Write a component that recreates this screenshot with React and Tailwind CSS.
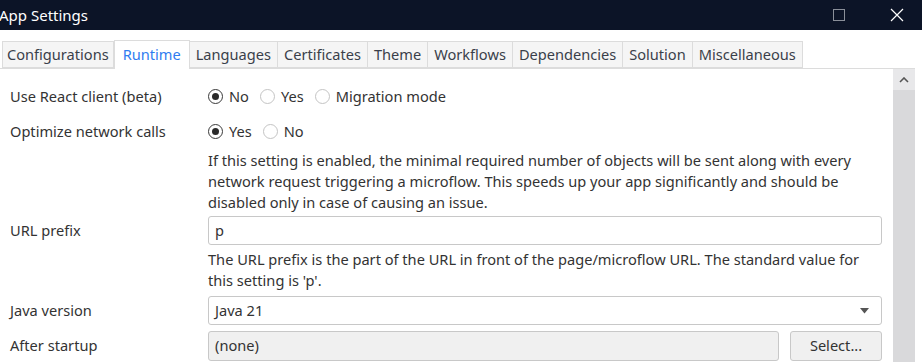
import React from 'react';

const tabs = ['Configurations', 'Runtime', 'Languages', 'Certificates', 'Theme', 'Workflows', 'Dependencies', 'Solution', 'Miscellaneous'];

const Radio = ({ checked, label }) => (
  <label className="flex items-center gap-[6px] mr-[11px]">
    <span
      className={
        'w-[15px] h-[15px] rounded-full border flex items-center justify-center bg-white ' +
        (checked ? 'border-[#3a3a3a]' : 'border-[#c4c4c4]')
      }
    >
      {checked && <span className="w-[7px] h-[7px] rounded-full bg-[#2a2a2a]" />}
    </span>
    <span>{label}</span>
  </label>
);

const App = () => {
  return (
    <div
      className="w-[922px] h-[362px] overflow-hidden bg-white text-[14.6px] text-[#333] flex flex-col"
      style={{ fontFamily: '"Noto Sans", "Open Sans", sans-serif' }}
    >
      {/* Title bar */}
      <div className="h-[30px] shrink-0 bg-[#0c1427] flex items-center text-white">
        <span className="ml-[-1px] text-[15px] flex-1">App Settings</span>
        <span className="w-[12px] h-[12px] border border-[#8a8f99] mr-[45px]" />
        <svg width="14" height="14" viewBox="0 0 14 14" className="mr-[18px]">
          <path d="M1 1 L13 13 M13 1 L1 13" stroke="#fff" strokeWidth="1.2" />
        </svg>
      </div>

      {/* Tabs */}
      <div className="flex items-end pt-[10px] pl-[2px] w-[915px] border-b border-[#dcdcdc] h-[39px] shrink-0">
        {tabs.map((t) =>
          t === 'Runtime' ? (
            <div
              key={t}
              className="h-[29px] px-[8px] bg-white border border-b-0 border-[#dcdcdc] text-[#2f7cf0] flex items-center mb-[-1px]"
            >
              {t}
            </div>
          ) : (
            <div
              key={t}
              className="h-[27px] px-[6px] first:px-[4px] bg-[#f5f5f5] border border-l-0 first:border-l border-[#dcdcdc] text-[#3a3f4a] flex items-center"
            >
              {t}
            </div>
          )
        )}
      </div>

      {/* Body */}
      <div className="flex flex-1 min-h-0">
        <div className="w-[893px] pt-[10px] pr-[11px]">
          <div className="flex items-center h-[35px]">
            <div className="w-[208px] pl-[10px]">Use React client (beta)</div>
            <div className="flex items-center">
              <Radio checked label="No" />
              <Radio label="Yes" />
              <Radio label="Migration mode" />
            </div>
          </div>
          <div className="flex items-center h-[35px]">
            <div className="w-[208px] pl-[10px]">Optimize network calls</div>
            <div className="flex items-center">
              <Radio checked label="Yes" />
              <Radio label="No" />
            </div>
          </div>
          <p className="ml-[208px] mt-[1px] leading-[21px]">
            If this setting is enabled, the minimal required number of objects will be sent along with every network request triggering a microflow. This speeds up your app significantly and should be disabled only in case of causing an issue.
          </p>
          <div className="flex items-center mt-[3px]">
            <div className="w-[208px] pl-[10px]">URL prefix</div>
            <div className="flex-1 h-[29px] border border-[#c8c8c8] rounded-[3px] px-[6px] flex items-center">p</div>
          </div>
          <p className="ml-[208px] mt-[4px] leading-[21px]">
            The URL prefix is the part of the URL in front of the page/microflow URL. The standard value for this setting is 'p'.
          </p>
          <div className="flex items-center mt-[5px]">
            <div className="w-[208px] pl-[10px]">Java version</div>
            <div className="flex-1 h-[29px] border border-[#c8c8c8] rounded-[3px] pl-[6px] pr-[12px] flex items-center justify-between">
              <span>Java 21</span>
              <svg width="9" height="6" viewBox="0 0 9 6">
                <path d="M0 0 H9 L4.5 5.5 Z" fill="#555" />
              </svg>
            </div>
          </div>
          <div className="flex items-center mt-[6px]">
            <div className="w-[208px] pl-[10px]">After startup</div>
            <div className="flex-1 h-[30px] border border-[#c8c8c8] rounded-[3px] bg-[#f0f0f0] px-[6px] flex items-center">(none)</div>
            <button className="ml-[11px] w-[92px] h-[30px] border border-[#c8c8c8] rounded-[3px] bg-[#f0f0f0] text-[#333]">
              Select...
            </button>
          </div>
        </div>

        {/* Scrollbar */}
        <div className="w-[22px] bg-[#d9d9db] flex flex-col">
          <div className="h-[21px] bg-[#e8e8ea] flex items-center justify-center">
            <svg width="10" height="6" viewBox="0 0 10 6">
              <path d="M1 5 L5 1 L9 5" stroke="#555" strokeWidth="1.6" fill="none" />
            </svg>
          </div>
        </div>
      </div>
    </div>
  );
};

export default App;
